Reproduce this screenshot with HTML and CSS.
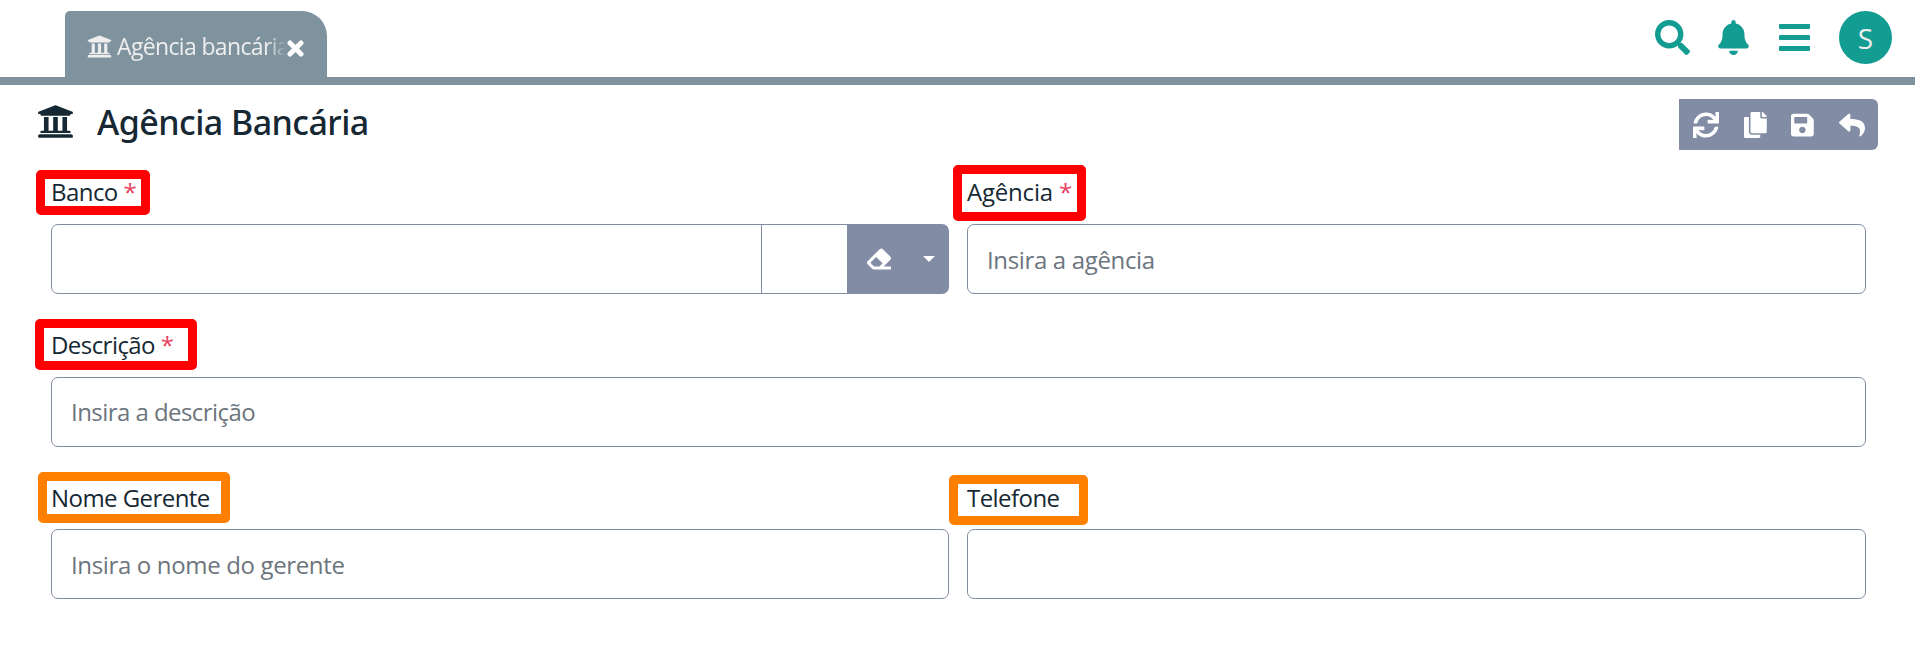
FILE: index.html
```html
<!DOCTYPE html>
<html lang="pt-BR">
<head>
<meta charset="utf-8">
<title>Agência Bancária</title>
<link rel="stylesheet" href="styles.css">
</head>
<body>
<svg class="defs" aria-hidden="true">
  <symbol id="bank" viewBox="0 0 512 512"><path d="M496 128v16a8 8 0 0 1-8 8h-24v12c0 6.627-5.373 12-12 12H60c-6.627 0-12-5.373-12-12v-12H24a8 8 0 0 1-8-8v-16a8 8 0 0 1 4.941-7.392l232-88a7.996 7.996 0 0 1 6.118 0l232 88A8 8 0 0 1 496 128zm-24 304H40c-13.255 0-24 10.745-24 24v16a8 8 0 0 0 8 8h464a8 8 0 0 0 8-8v-16c0-13.255-10.745-24-24-24zM96 192v192H60c-6.627 0-12 5.373-12 12v20h416v-20c0-6.627-5.373-12-12-12h-36V192h-64v192h-64V192h-64v192h-64V192H96z"/></symbol>
</svg>
<header class="topbar">
  <div class="tab">
    <svg class="tab-icon"><use href="#bank"/></svg>
    <span class="tab-text">Agência bancária</span>
    <svg class="tab-close" viewBox="0 0 17 17"><path d="M3 3l11 11M14 3L3 14"/></svg>
  </div>
  <nav class="actions">
    <svg class="ic-search" viewBox="0 0 512 512"><path d="M505 442.7L405.3 343c-4.500-4.500-10.600-7-17-7H372c27.600-35.300 44-79.700 44-128C416 93.100 322.900 0 208 0S0 93.100 0 208s93.100 208 208 208c48.300 0 92.700-16.400 128-44v16.300c0 6.400 2.500 12.500 7 17l99.700 99.700c9.400 9.400 24.600 9.400 33.900 0l28.300-28.300c9.400-9.400 9.400-24.600.1-34zM208 336c-70.700 0-128-57.200-128-128 0-70.700 57.200-128 128-128 70.700 0 128 57.200 128 128 0 70.700-57.200 128-128 128z"/></svg>
    <svg class="ic-bell" viewBox="0 0 448 512"><path d="M224 512c35.320 0 63.970-28.650 63.970-64H160.030c0 35.350 28.650 64 63.970 64zm215.390-149.710c-19.320-20.760-55.470-51.990-55.470-154.290 0-77.700-54.480-139.900-127.940-155.160V32c0-17.670-14.320-32-31.980-32s-31.980 14.330-31.980 32v20.840C118.560 68.100 64.080 130.300 64.080 208c0 102.300-36.150 133.530-55.470 154.290-6 6.450-8.660 14.160-8.610 21.710.11 16.400 12.980 32 32.100 32h383.800c19.120 0 32-15.600 32.100-32 .05-7.550-2.610-15.270-8.610-21.710z"/></svg>
    <svg class="ic-bars" viewBox="0 0 31 27"><rect width="31" height="5" rx="1"/><rect y="11" width="31" height="5" rx="1"/><rect y="22" width="31" height="5" rx="1"/></svg>
    <div class="avatar">S</div>
  </nav>
</header>
<main class="page">
  <div class="page-head">
    <svg class="title-icon"><use href="#bank"/></svg>
    <h1 class="title">Agência Bancária</h1>
    <div class="toolbar">
      <svg class="tool" viewBox="0 0 512 512"><path d="M440.650 12.570l4 82.770A247.160 247.160 0 0 0 255.830 8C134.730 8 33.910 94.920 12.290 209.820A12 12 0 0 0 24.090 224h49.050a12 12 0 0 0 11.670-9.260 175.910 175.910 0 0 1 317-56.940l-101.460-4.860a12 12 0 0 0-12.570 12v47.410a12 12 0 0 0 12 12H500a12 12 0 0 0 12-12V12a12 12 0 0 0-12-12h-47.370a12 12 0 0 0-11.980 12.570zM255.830 432a175.610 175.610 0 0 1-146-77.800l101.800 4.870a12 12 0 0 0 12.570-12v-47.400a12 12 0 0 0-12-12H12a12 12 0 0 0-12 12V500a12 12 0 0 0 12 12h47.350a12 12 0 0 0 12-12.600l-4.150-82.570A247.170 247.170 0 0 0 255.830 504c121.110 0 221.930-86.920 243.550-201.820a12 12 0 0 0-11.800-14.180h-49.050a12 12 0 0 0-11.670 9.260A175.860 175.860 0 0 1 255.830 432z"/></svg>
      <svg class="tool" viewBox="0 0 448 512"><path d="M320 448v40c0 13.255-10.745 24-24 24H24c-13.255 0-24-10.745-24-24V120c0-13.255 10.745-24 24-24h72v296c0 30.879 25.121 56 56 56h168zm0-344V0H152c-13.255 0-24 10.745-24 24v368c0 13.255 10.745 24 24 24h272c13.255 0 24-10.745 24-24V128H344c-13.200 0-24-10.800-24-24zm120.971-31.029L375.029 7.029A24 24 0 0 0 358.059 0H352v96h96v-6.059a24 24 0 0 0-7.029-16.970z"/></svg>
      <svg class="tool" viewBox="0 0 448 512"><path d="M433.941 129.941l-83.882-83.882A48 48 0 0 0 316.118 32H48C21.490 32 0 53.490 0 80v352c0 26.510 21.490 48 48 48h352c26.510 0 48-21.490 48-48V163.882a48 48 0 0 0-14.059-33.941zM224 416c-35.346 0-64-28.654-64-64 0-35.346 28.654-64 64-64s64 28.654 64 64c0 35.346-28.654 64-64 64zm96-304.520V212c0 6.627-5.373 12-12 12H76c-6.627 0-12-5.373-12-12V108c0-6.627 5.373-12 12-12h228.520c3.183 0 6.235 1.264 8.485 3.515l3.480 3.480A11.996 11.996 0 0 1 320 111.480z"/></svg>
      <svg class="tool" viewBox="0 0 512 512"><path d="M8.309 189.836L184.313 37.851C199.719 24.546 224 35.347 224 56.015v80.053c160.629 1.839 288 34.032 288 186.258 0 61.441-39.581 122.309-83.333 154.132-13.653 9.931-33.111-2.533-28.077-18.631 45.344-145.012-21.507-183.510-176.590-185.742V360c0 20.700-24.300 31.453-39.687 18.164l-176.004-152c-11.071-9.562-11.086-26.753 0-36.328z"/></svg>
    </div>
  </div>
  <form class="form">
    <div class="field">
      <label class="label tight">Banco <span class="req">*</span><span class="mark mark-banco"></span></label>
      <div class="group">
        <div class="box box-main"></div>
        <div class="box box-code"></div>
        <div class="group-btns">
          <svg class="ic-eraser" viewBox="0 0 512 512"><path d="M497.941 273.941c18.745-18.745 18.745-49.137 0-67.882l-160-160c-18.745-18.745-49.136-18.746-67.883 0l-256 256c-18.745 18.745-18.745 49.137 0 67.882l96 96A48.004 48.004 0 0 0 144 480h356c6.627 0 12-5.373 12-12v-40c0-6.627-5.373-12-12-12H355.883l142.058-142.059zm-302.627-62.627l137.373 137.373L265.373 416H150.628l-80-80 124.686-124.686z"/></svg>
          <span class="caret"></span>
        </div>
      </div>
    </div>
    <div class="field">
      <label class="label">Agência <span class="req">*</span><span class="mark mark-agencia"></span></label>
      <div class="box"><span>Insira a agência</span></div>
    </div>
    <div class="field wide">
      <label class="label tight">Descrição <span class="req">*</span><span class="mark mark-descricao"></span></label>
      <div class="box tight"><span>Insira a descrição</span></div>
    </div>
    <div class="field">
      <label class="label low tight">Nome Gerente<span class="mark warn mark-gerente"></span></label>
      <div class="box"><span>Insira o nome do gerente</span></div>
    </div>
    <div class="field">
      <label class="label low tight">Telefone<span class="mark warn mark-telefone"></span></label>
      <div class="box"></div>
    </div>
  </form>
</main>
</body>
</html>
```
FILE: styles.css
```css
* { box-sizing: border-box; }
body { margin: 0; background: #fff; color: #152833; font-family: "Segoe UI", "Open Sans", "Noto Sans", sans-serif; font-size: 24px; overflow: hidden; }
svg { display: block; flex: none; fill: currentColor; }
.defs { position: absolute; width: 0; height: 0; }

.topbar { height: 85px; border-bottom: 8px solid #7f939e; padding: 11px 23px 0 65px; display: flex; justify-content: space-between; align-items: flex-start; }
.tab { width: 262px; height: 66px; background: #7f939e; border-radius: 5px 25px 0 0; color: #eee; display: flex; align-items: center; padding: 4px 22px 0; }
.tab-icon { width: 25px; height: 25px; margin-right: 5px; }
.tab-text { width: 170px; white-space: nowrap; font-size: 23px; line-height: 34px; letter-spacing: -0.65px; -webkit-mask-image: linear-gradient(to right, #000 150px, transparent 169px); mask-image: linear-gradient(to right, #000 150px, transparent 169px); }
.tab-close { width: 17px; height: 17px; margin-top: 4px; stroke: #fff; stroke-width: 5; stroke-linecap: round; }
.actions { height: 53px; display: flex; align-items: center; color: #139c92; }
.ic-search { width: 35px; height: 35px; margin-right: 28px; }
.ic-bell { width: 31px; height: 35px; margin-right: 30px; }
.ic-bars { width: 31px; height: 27px; margin-right: 29px; }
.avatar { width: 53px; height: 53px; border-radius: 50%; background: #139c92; color: #eee; font-size: 28px; line-height: 54px; text-align: center; }

.page { padding: 14px 37px 0; }
.page-head { height: 51px; display: flex; align-items: center; }
.title-icon { width: 37px; height: 37px; margin: -7px 23px 0 0; }
.title { margin: -6px 0 0; font-family: "Segoe UI", "Noto Sans", sans-serif; font-size: 34px; line-height: 46px; font-weight: 500; letter-spacing: -0.55px; white-space: nowrap; }
.toolbar { margin-left: auto; width: 199px; height: 51px; background: #828da5; color: #fff; border-radius: 0 6px 6px 0; display: flex; align-items: center; padding: 0 13px 0 14px; justify-content: space-between; }
.tool { height: 26px; width: auto; }

.form { padding: 21px 12px 0 14px; display: grid; grid-template-columns: 898px 899px; column-gap: 18px; }
.field { height: 152.500px; }
.wide { grid-column: 1 / 3; }
.label { position: relative; display: block; height: 53px; line-height: 41px; white-space: pre; letter-spacing: -0.2px; }
.low { line-height: 43px; }
.box { height: 70px; border: 1px solid #828da5; border-radius: 7px; padding: 0 19px; display: flex; align-items: center; color: #6c757d; letter-spacing: -0.35px; }
.tight { letter-spacing: -0.55px; }
.req { color: #e8415f; }
.group { display: flex; }
.box-main { width: 711px; border-radius: 7px 0 0 7px; }
.box-code { width: 86px; margin-left: -1px; border-radius: 0; border-right: 0; }
.group-btns { width: 102px; height: 70px; background: #828da5; border-radius: 0 7px 7px 0; display: flex; align-items: center; justify-content: space-between; padding: 0 14px 0 20px; color: #fff; }
.ic-eraser { width: 24px; height: 24px; }
.caret { border: 6px solid transparent; border-top-color: #fff; border-bottom: 0; }

/* Highlight frames drawn over the field labels */
.mark { position: absolute; border: 9px solid #f00; border-radius: 5px; }
.warn { border-color: #ff8000; }
.mark-banco { left: -15px; top: -1px; width: 114px; height: 45px; }
.mark-agencia { left: -14px; top: -6px; width: 133px; height: 56px; }
.mark-descricao { left: -16px; top: -5px; width: 162px; height: 51px; }
.mark-gerente { left: -13px; top: -4px; width: 192px; height: 51px; }
.mark-telefone { left: -18px; top: -1px; width: 139px; height: 50px; }
```
